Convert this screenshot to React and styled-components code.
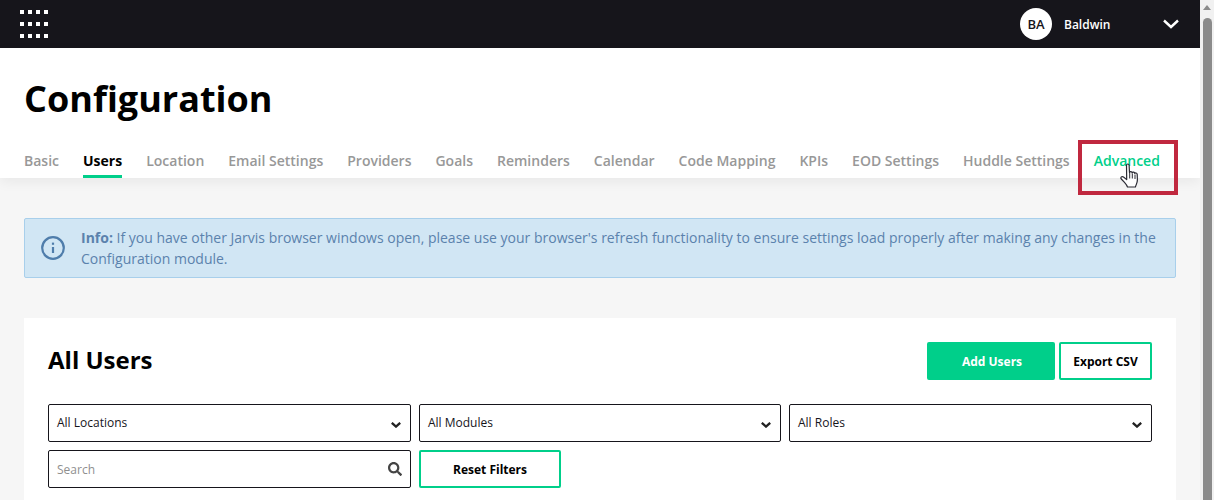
import React from 'react';
import styled, { createGlobalStyle } from 'styled-components';
import { FaSearch } from 'react-icons/fa';

const GlobalStyle = createGlobalStyle`
  html, body {
    margin: 0;
    height: 500px;
    overflow: hidden;
    background: #f6f6f6;
    font-family: "Open Sans", "Liberation Sans", sans-serif;
  }
  * { box-sizing: border-box; }
`;

const Shell = styled.div`
  display: flex;
  width: 1214px;
  height: 500px;
  overflow: hidden;
`;

const Page = styled.div`
  width: 1200px;
  flex: none;
`;

const ScrollTrack = styled.div`
  width: 14px;
  flex: none;
  background: #f1f1f1;
  display: flex;
  flex-direction: column;
  align-items: center;
  padding-top: 5px;
`;

const ScrollArrow = styled.div`
  width: 0;
  height: 0;
  border-left: 4px solid transparent;
  border-right: 4px solid transparent;
  border-bottom: 5px solid #8b8b8b;
`;

const ScrollThumb = styled.div`
  width: 9px;
  flex: 1;
  margin-top: 8px;
  background: #8b8b8b;
  border-radius: 5px 5px 0 0;
`;

const TopBar = styled.header`
  height: 48px;
  background: #16151b;
  display: flex;
  align-items: center;
  justify-content: space-between;
  padding: 0 21px 0 20px;
`;

const AppGrid = styled.div`
  display: grid;
  grid-template-columns: repeat(4, 4px);
  grid-auto-rows: 4px;
  column-gap: 4px;
  row-gap: 8px;
`;

const AppDot = styled.span`
  background: #fff;
`;

const UserArea = styled.div`
  display: flex;
  align-items: center;
  color: #fff;
`;

const Avatar = styled.div`
  width: 32px;
  height: 32px;
  border-radius: 50%;
  background: #fff;
  color: #16151b;
  display: flex;
  align-items: center;
  justify-content: center;
  font-size: 13px;
  font-weight: 600;
`;

const UserName = styled.span`
  font-size: 12px;
  font-weight: 600;
  margin-left: 12px;
  width: 99px;
`;

const HeaderBlock = styled.div`
  background: #fff;
  height: 130px;
  padding: 24px 24px 0;
  box-shadow: 0 4px 12px rgba(0, 0, 0, 0.06);
`;

const Title = styled.h1`
  margin: 0;
  font-size: 36px;
  line-height: 54px;
  font-weight: 700;
  color: #000;
`;

const Tabs = styled.nav`
  display: flex;
  gap: 24px;
  margin-top: 19px;
`;

const Tab = styled.div`
  position: relative;
  height: 33px;
  padding-top: 6px;
  font-size: 14px;
  line-height: 19px;
  font-weight: ${(p) => (p.$active ? 700 : 600)};
  white-space: nowrap;
  color: ${(p) => (p.$active ? '#000' : p.$hover ? '#00cf8a' : '#989898')};
  border-bottom: 3px solid ${(p) => (p.$active ? '#00cf8a' : 'transparent')};
`;

const Highlight = styled.div`
  position: absolute;
  left: -16px;
  top: -5px;
  width: 100px;
  height: 55px;
  border: 4px solid #c0283f;
`;

const Pointer = styled.svg`
  position: absolute;
  left: 26px;
  top: 18px;
`;

const Content = styled.main`
  padding: 40px 24px 0;
`;

const InfoBox = styled.div`
  display: flex;
  align-items: center;
  height: 60px;
  padding: 0 15px;
  background: #d1e6f4;
  border: 1px solid #a8cfeb;
  border-radius: 2px;
  color: #5b82ad;
  font-size: 14px;
  line-height: 21px;
`;

const InfoIcon = styled.svg`
  flex: none;
  margin-right: 15px;
`;

const Card = styled.section`
  margin-top: 40px;
  background: #fff;
  padding: 24px 24px 24px;
  height: 300px;
`;

const CardHead = styled.div`
  display: flex;
  justify-content: space-between;
  align-items: center;
  margin-bottom: 24px;
`;

const CardTitle = styled.h2`
  margin: 0;
  padding-bottom: 2px;
  font-size: 24px;
  line-height: 36px;
  font-weight: 700;
  color: #000;
`;

const Actions = styled.div`
  display: flex;
  gap: 4px;
`;

const Button = styled.button`
  height: 38px;
  width: ${(p) => p.$w}px;
  padding: 0 0 0 ${(p) => (p.$solid ? 2 : 0)}px;
  border: 2px solid #00cf8a;
  border-radius: 2px;
  background: ${(p) => (p.$solid ? '#00cf8a' : '#fff')};
  color: ${(p) => (p.$solid ? '#fff' : '#000')};
  font-family: inherit;
  font-size: 12px;
  font-weight: 700;
`;

const Filters = styled.div`
  display: grid;
  grid-template-columns: 363px 362px 363px;
  gap: 8px;
`;

const Field = styled.div`
  height: 38px;
  display: flex;
  align-items: center;
  justify-content: space-between;
  padding: 0 8px;
  border: 1px solid #16151b;
  border-radius: 2px;
  font-size: 12px;
  color: #16151b;
`;

const SelectField = styled(Field)`
  padding-bottom: 2px;
`;

const SearchField = styled(Field)`
  color: #8f8f8f;
`;

const SelectChevron = styled.svg`
  margin-top: 5px;
  margin-right: 1px;
`;

const SearchIcon = styled.span`
  display: flex;
  color: #444;
  font-size: 14px;
`;

const tabs = [
  'Basic',
  'Users',
  'Location',
  'Email Settings',
  'Providers',
  'Goals',
  'Reminders',
  'Calendar',
  'Code Mapping',
  'KPIs',
  'EOD Settings',
  'Huddle Settings',
];

const Chevron = () => (
  <SelectChevron width="10" height="6" viewBox="0 0 10 6" fill="none" stroke="#222" strokeWidth="2.3">
    <path d="M.8.8 5 4.600 9.200.8" />
  </SelectChevron>
);

const App = () => {
  return (
    <Shell>
      <GlobalStyle />
      <Page>
        <TopBar>
          <AppGrid>
            {Array.from({ length: 12 }).map((_, i) => (
              <AppDot key={i} />
            ))}
          </AppGrid>
          <UserArea>
            <Avatar>BA</Avatar>
            <UserName>Baldwin</UserName>
            <svg width="16" height="10" viewBox="0 0 16 10" fill="none" stroke="#fff" strokeWidth="2.4">
              <path d="M1 1.5 8 8l7-6.5" />
            </svg>
          </UserArea>
        </TopBar>
        <HeaderBlock>
          <Title>Configuration</Title>
          <Tabs>
            {tabs.map((t) => (
              <Tab key={t} $active={t === 'Users'}>
                {t}
              </Tab>
            ))}
            <Tab $hover>
              Advanced
              <Highlight />
              <Pointer width="20" height="26" viewBox="0 0 20 26">
                <path
                  d="M6.500 2.200C6.500.6 9 .6 9.100 2.200l.4 7.300c.3-1.100 2.500-1.100 2.700.3.300-1 2.400-.9 2.600.6.500-.8 2.300-.5 2.400 1l.2 5c.1 3-1 4.500-2 7.600H7.500c-.5-1.500-1.500-2.900-3-4.600L1.300 16c-1.200-1.700.7-3.200 2.200-2l3.200 2.600z"
                  fill="#fff"
                  stroke="#2a2a33"
                  strokeWidth="1.200"
                  strokeLinejoin="round"
                />
                <path d="M9.700 10v5.500M12.300 10.500v5M15 11.500v4.500" stroke="#2a2a33" strokeWidth="1" fill="none" />
              </Pointer>
            </Tab>
          </Tabs>
        </HeaderBlock>
        <Content>
          <InfoBox>
            <InfoIcon width="26" height="26" viewBox="0 0 26 26" fill="none" stroke="#4f7dab" strokeWidth="2.2">
              <circle cx="13" cy="13" r="10.800" />
              <path d="M13 12v6" />
              <path d="M13 7.600v2.200" />
            </InfoIcon>
            <div>
              <strong>Info:</strong> If you have other Jarvis browser windows open, please use your browser's refresh
              functionality to ensure settings load properly after making any changes in the Configuration module.
            </div>
          </InfoBox>
          <Card>
            <CardHead>
              <CardTitle>All Users</CardTitle>
              <Actions>
                <Button $solid $w={128}>Add Users</Button>
                <Button $w={93}>Export CSV</Button>
              </Actions>
            </CardHead>
            <Filters>
              <SelectField>
                All Locations
                <Chevron />
              </SelectField>
              <SelectField>
                All Modules
                <Chevron />
              </SelectField>
              <SelectField>
                All Roles
                <Chevron />
              </SelectField>
              <SearchField>
                Search
                <SearchIcon><FaSearch /></SearchIcon>
              </SearchField>
              <Button $w={142}>Reset Filters</Button>
            </Filters>
          </Card>
        </Content>
      </Page>
      <ScrollTrack>
        <ScrollArrow />
        <ScrollThumb />
      </ScrollTrack>
    </Shell>
  );
};

export default App;
